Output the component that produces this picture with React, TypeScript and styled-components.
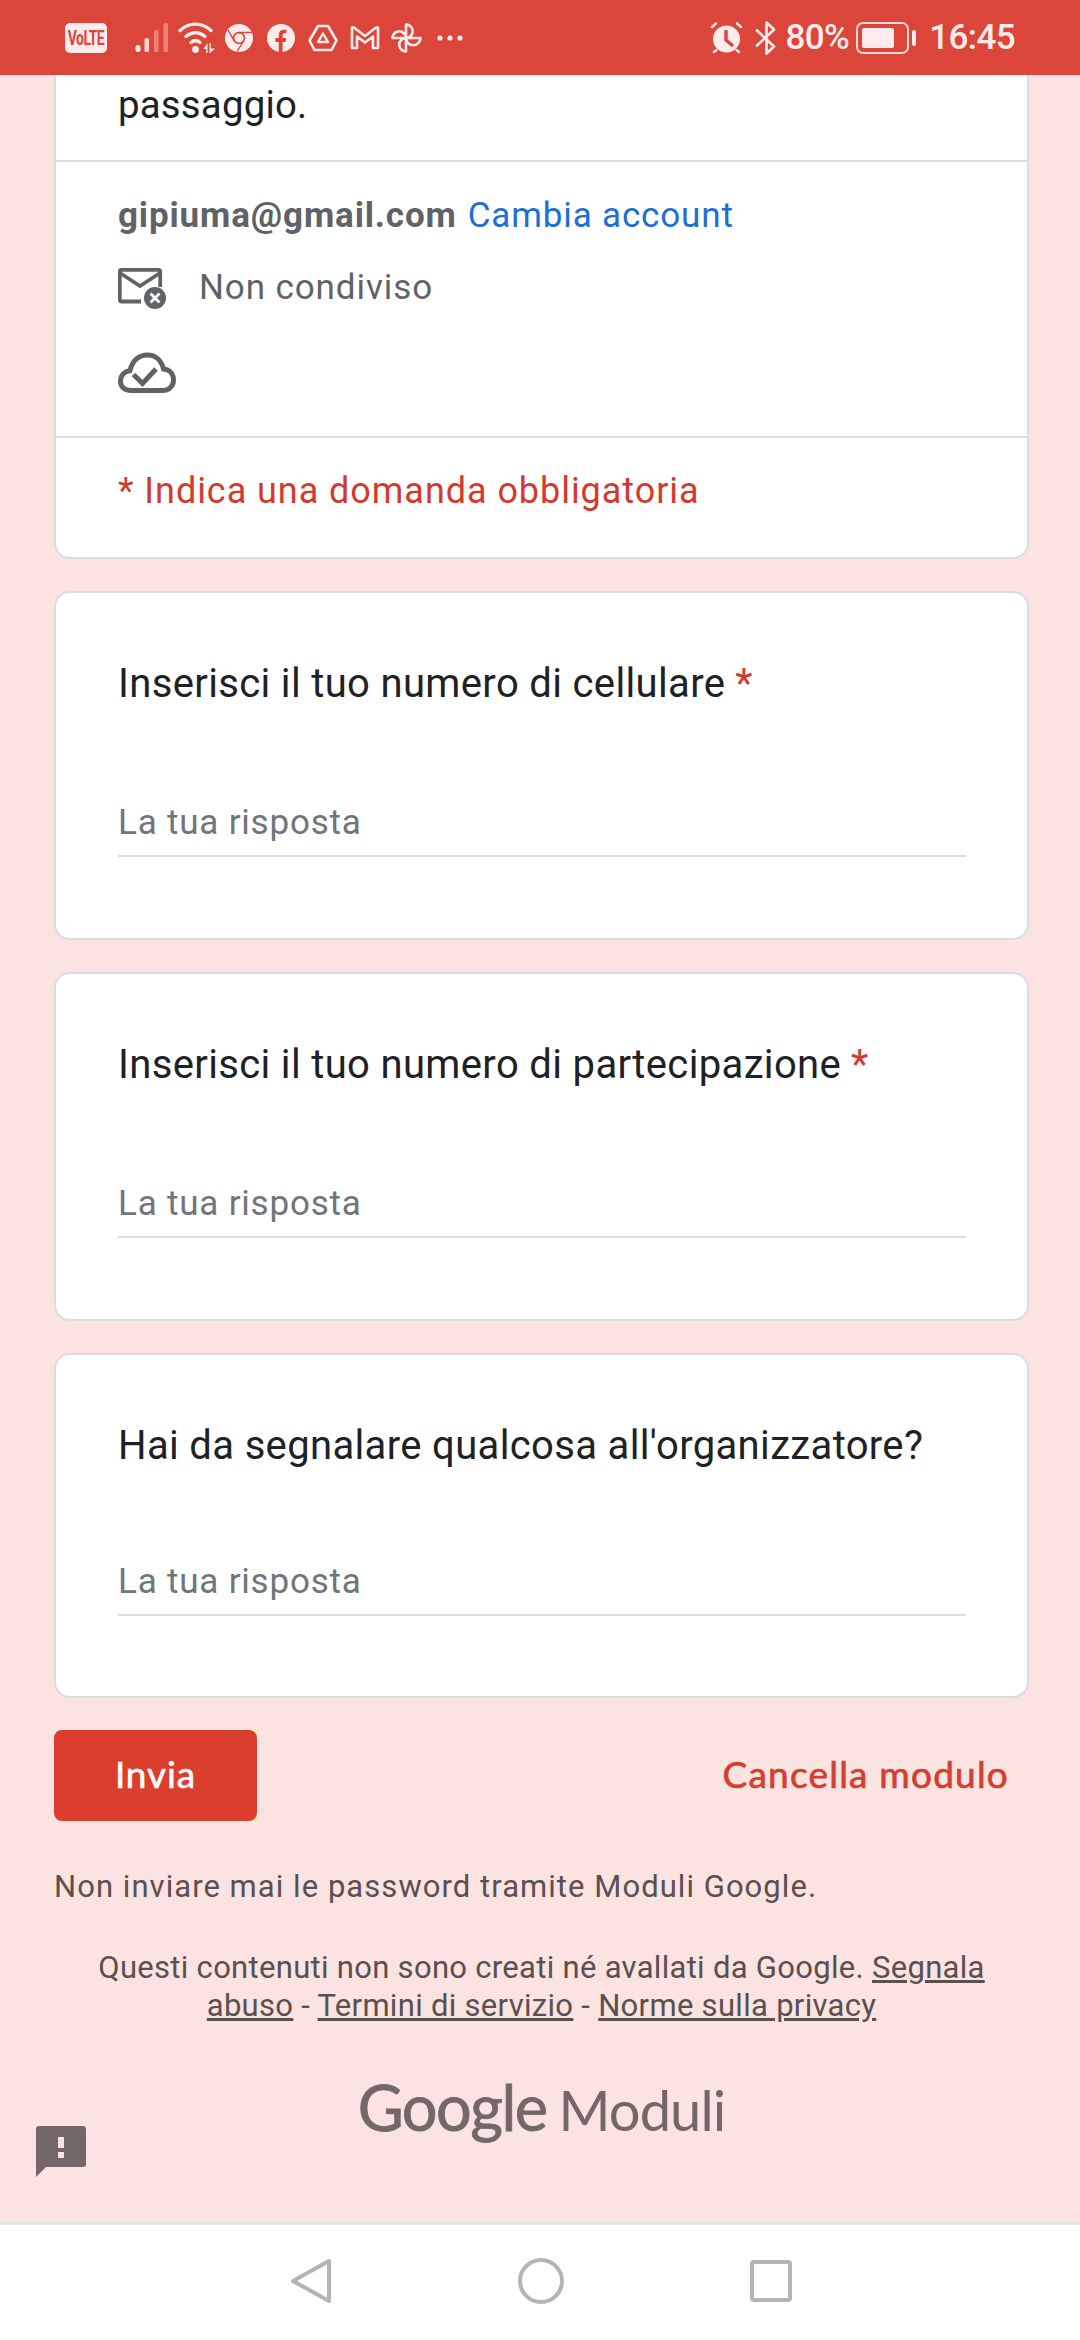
import styled, { createGlobalStyle } from "styled-components";

const GlobalStyle = createGlobalStyle`
  html, body {
    margin: 0;
    padding: 0;
    background: #fae3e1;
  }
  * {
    box-sizing: border-box;
  }
`;

const Screen = styled.div`
  width: 1080px;
  height: 2340px;
  display: flex;
  flex-direction: column;
  overflow: hidden;
  background: #fae3e1;
  font-family: Roboto, "Liberation Sans", sans-serif;
  position: relative;
`;

const StatusBar = styled.div`
  height: 75px;
  flex: none;
  background: #dc4539;
  color: #fdeceb;
  display: flex;
  align-items: center;
  justify-content: space-between;
  padding: 0 65px;
`;

const StatusGroup = styled.div`
  display: flex;
  align-items: center;
`;

const StatusText = styled.span<{ $left: number }>`
  margin-left: ${(p) => p.$left}px;
  font-size: 35px;
  font-weight: 500;
  line-height: 40px;
  letter-spacing: -0.6px;
`;

const VolteBadge = styled.div`
  width: 42px;
  height: 30px;
  flex: none;
  border-radius: 5px;
  background: #fdeceb;
  color: #dc4539;
  display: flex;
  align-items: center;
  justify-content: center;
  font-size: 14px;
  font-weight: 700;
  letter-spacing: -0.6px;
`;

const VolteLabel = styled.span`
  display: block;
  transform: scaleY(1.4);
`;

const Main = styled.div`
  flex: 1;
  display: flex;
  flex-direction: column;
  padding: 0 51px 0 54px;
`;

const Card = styled.section<{ $height: number }>`
  height: ${(p) => p.$height}px;
  flex: none;
  background: #fff;
  border: 2px solid #dadce0;
  border-radius: 16px;
  margin-bottom: 32px;
  padding: 66px 62px 0;
  display: flex;
  flex-direction: column;
`;

const HeaderCard = styled(Card)`
  border-top: 0;
  border-top-left-radius: 0;
  border-top-right-radius: 0;
  padding: 0;
`;

const HeaderRow = styled.div<{ $height: number }>`
  height: ${(p) => p.$height}px;
  flex: none;
  padding: 0 62px;
  border-bottom: 2px solid #dadce0;
`;

const LeadText = styled.div`
  font-size: 38.4px;
  line-height: 48px;
  letter-spacing: 0.2px;
  color: #202124;
  padding-top: 6px;
`;

const AccountLine = styled.div`
  font-size: 35px;
  line-height: 44px;
  padding-top: 32px;
  letter-spacing: 0.85px;
`;

const Email = styled.span`
  font-weight: 700;
  color: #5f6368;
`;

const SwitchLink = styled.span`
  color: #1b6fd6;
  margin-left: 11px;
`;

const ShareRow = styled.div`
  display: flex;
  align-items: center;
  gap: 33px;
  margin-top: 28px;
  color: #5f6368;
  font-size: 35px;
  line-height: 44px;
  letter-spacing: 0.9px;
`;

const CloudRow = styled.div`
  margin-top: 42px;
  height: 42px;
`;

const RequiredNote = styled.div`
  font-size: 36px;
  line-height: 46px;
  color: #d3392d;
  padding: 30px 62px 0;
  letter-spacing: 0.95px;
`;

const Question = styled.div`
  font-size: 40px;
  line-height: 50px;
  color: #202124;
  letter-spacing: 0.35px;
`;

const Star = styled.span`
  color: #d3392d;
  margin-left: 10px;
`;

const AnswerField = styled.div<{ $top: number }>`
  width: 848px;
  margin-top: ${(p) => p.$top}px;
  padding-bottom: 12px;
  border-bottom: 2px solid #dadce0;
  font-size: 35px;
  line-height: 40px;
  letter-spacing: 0.8px;
  color: #70757a;
`;

const ActionRow = styled.div`
  display: flex;
  align-items: center;
  justify-content: space-between;
  padding-right: 20px;
  font-family: Lato, Roboto, sans-serif;
`;

const SubmitButton = styled.button`
  width: 203px;
  height: 91px;
  border: 0;
  border-radius: 8px;
  padding: 0 0 5px;
  background: #db3e2d;
  color: #fff;
  font-family: inherit;
  font-size: 37px;
  letter-spacing: 0.9px;
  -webkit-text-stroke: 0.6px #fff;
`;

const ClearButton = styled.span`
  margin-bottom: 5px;
  color: #d43f30;
  font-size: 37px;
  letter-spacing: 1.2px;
  -webkit-text-stroke: 0.7px #d43f30;
`;

const PasswordNote = styled.div`
  margin-top: 46px;
  font-size: 31px;
  line-height: 40px;
  letter-spacing: 1.05px;
  color: #5b4f4f;
`;

const Disclaimer = styled.div`
  margin-top: 42px;
  padding: 0 30px;
  text-align: center;
  font-size: 31px;
  line-height: 38px;
  letter-spacing: 0.3px;
  color: #5b4f4f;
`;

const LegalLink = styled.span`
  text-decoration: underline;
`;

const Branding = styled.div`
  margin-top: 42px;
  display: flex;
  justify-content: center;
  align-items: baseline;
  gap: 12px;
  color: #736867;
  font-family: Lato, "Open Sans", sans-serif;
`;

const BrandName = styled.span`
  font-size: 63px;
  line-height: 80px;
  font-weight: 400;
  letter-spacing: -1.5px;
  -webkit-text-stroke: 0.8px #736867;
`;

const BrandProduct = styled.span`
  font-size: 56px;
  line-height: 80px;
  font-weight: 400;
  letter-spacing: -0.9px;
`;

const FeedbackIcon = styled.svg`
  position: absolute;
  left: 36px;
  top: 2126px;
`;

const NavBar = styled.nav`
  height: 118px;
  flex: none;
  background: #fff;
  border-top: 3px solid #e4e6e3;
  display: flex;
  align-items: center;
  justify-content: center;
  gap: 186px;
  padding: 0 0 3px 2px;
`;

const Icon = styled.svg<{ $left?: number }>`
  flex: none;
  display: block;
  margin-left: ${(p) => p.$left ?? 0}px;
`;

const Signal = () => (
  <Icon $left={28} width="34" height="30" viewBox="0 0 34 30">
    <rect x="0.500" y="22" width="5" height="7" rx="2.500" fill="#fdeceb" />
    <rect x="9.500" y="15" width="4.500" height="14" rx="1.500" fill="#f9d2cd" />
    <rect x="19" y="7" width="4.500" height="22" rx="1.500" fill="#ed8177" />
    <rect x="28.500" y="0" width="4.500" height="29" rx="1.500" fill="#ed8177" />
  </Icon>
);

const Wifi = () => (
  <Icon $left={9} width="38" height="32" viewBox="0 0 38 32" fill="none">
    <path d="M2 8.500C11 0 24 0 33 8.500" stroke="#fdeceb" strokeWidth="3.400" strokeLinecap="round" />
    <path d="M8 14.500C14 9.500 21 9.500 27 14.500" stroke="#fdeceb" strokeWidth="3.400" strokeLinecap="round" />
    <path d="M13 20.500C16 18 19 18 22 20.500" stroke="#fdeceb" strokeWidth="3.400" strokeLinecap="round" />
    <circle cx="17.500" cy="27.500" r="3.400" fill="#fdeceb" />
    <path d="M25.500 27l4-6v10h-1.200v-4zM31.500 21h1.300v5.500H37l-5.500 5z" fill="#fdeceb" />
  </Icon>
);

const ChromeIcon = () => (
  <Icon $left={9} width="28" height="28" viewBox="0 0 28 28" fill="none">
    <circle cx="14" cy="14" r="14" fill="#fdeceb" />
    <circle cx="14" cy="14" r="5.400" fill="#fdeceb" stroke="#dc4539" strokeWidth="1.600" />
    <path d="M14 8.500H27M9.200 16.800L3 6M18.700 16.800L12 27.500" stroke="#dc4539" strokeWidth="1.400" />
  </Icon>
);

const FacebookIcon = () => (
  <Icon $left={14} width="28" height="28" viewBox="0 0 28 28">
    <circle cx="14" cy="14" r="14" fill="#fdeceb" />
    <path d="M11.800 28V18H8.500v-4h3.300v-3c0-3.400 2-5.200 5-5.200 1.400 0 2.600.2 2.600.2v3.300h-1.600c-1.700 0-2.200 1-2.200 2.100V14h3.600l-.6 4h-3V28z" fill="#dc4539" />
  </Icon>
);

const DriveIcon = () => (
  <Icon $left={13} width="30" height="28" viewBox="0 0 30 28" fill="none">
    <path d="M10 2h10l8.500 14.500-5 9.500H6.500L1.500 16.500z" stroke="#fdeceb" strokeWidth="2.600" strokeLinejoin="round" />
    <path d="M15 9.500l5 8.500H10z" stroke="#fdeceb" strokeWidth="2.400" strokeLinejoin="round" />
  </Icon>
);

const GmailIcon = () => (
  <Icon $left={12} width="30" height="25" viewBox="0 0 30 25" fill="none">
    <path d="M2 23V2.500h2L15 11 26 2.500h2V23h-5V11.500l-8 6-8-6V23z" stroke="#fdeceb" strokeWidth="2.600" strokeLinejoin="round" />
  </Icon>
);

const PinwheelIcon = () => (
  <Icon $left={11} width="31" height="30" viewBox="0 0 31 30" fill="none">
    <path d="M15 15V1.500A6.750 6.750 0 0 1 15 15z" stroke="#fdeceb" strokeWidth="2.600" strokeLinejoin="round" />
    <path d="M15 15H29.500A7.250 7.250 0 0 1 15 15z" stroke="#fdeceb" strokeWidth="2.600" strokeLinejoin="round" />
    <path d="M15 15V28.500A6.750 6.750 0 0 1 15 15z" stroke="#fdeceb" strokeWidth="2.600" strokeLinejoin="round" />
    <path d="M15 15H1.500A6.750 6.750 0 0 1 15 15z" stroke="#fdeceb" strokeWidth="2.600" strokeLinejoin="round" />
  </Icon>
);

const MoreDots = () => (
  <Icon $left={15} width="26" height="6" viewBox="0 0 26 6">
    <circle cx="3" cy="3" r="2.600" fill="#fdeceb" />
    <circle cx="13" cy="3" r="2.600" fill="#fdeceb" />
    <circle cx="23" cy="3" r="2.600" fill="#fdeceb" />
  </Icon>
);

const AlarmIcon = () => (
  <Icon width="33" height="32" viewBox="0 0 33 32" fill="none">
    <circle cx="16.500" cy="17" r="13.500" fill="#fdeceb" />
    <path d="M16 8v10l7 6" stroke="#dc4539" strokeWidth="3.400" />
    <path d="M2 5l4-3.500M31 5l-4-3.500M4 30l2.500-2M29 30l-2.500-2" stroke="#fdeceb" strokeWidth="2.400" strokeLinecap="round" />
  </Icon>
);

const BluetoothIcon = () => (
  <Icon $left={12} width="21" height="34" viewBox="0 0 21 34" fill="none">
    <path d="M2 9.500l17 16-7.500 7V1.500l7.500 7-17 16" stroke="#fdeceb" strokeWidth="2.600" strokeLinejoin="round" strokeLinecap="round" />
  </Icon>
);

const BatteryIcon = () => (
  <Icon $left={7} width="60" height="32" viewBox="0 0 60 32" fill="none">
    <rect x="1" y="1" width="51" height="30" rx="6" stroke="#f9d9d5" strokeWidth="2" />
    <rect x="6" y="6" width="32" height="20" rx="2" fill="#fdeceb" />
    <rect x="56" y="8" width="4" height="16" rx="2" fill="#fdeceb" />
  </Icon>
);

const MailOffIcon = () => (
  <Icon width="48" height="41" viewBox="0 0 48 41" fill="none">
    <path d="M23 33.500H3A1.500 1.500 0 0 1 1.800 32V3A1.500 1.500 0 0 1 3 1.800h38A1.500 1.500 0 0 1 42.200 3v16" stroke="#5f6368" strokeWidth="3.800" />
    <path d="M2 5l20 13L42 5" stroke="#5f6368" strokeWidth="3.600" />
    <circle cx="37" cy="30" r="11" fill="#5f6368" />
    <path d="M32.500 25.500l9 9M41.500 25.500l-9 9" stroke="#fff" strokeWidth="2.800" />
  </Icon>
);

const CloudCheckIcon = () => (
  <Icon width="58" height="42" viewBox="0 0 58 42" fill="none">
    <path d="M13 38.500C6 38.500 2.500 34.500 2.500 29c0-5.500 4-9.500 9.500-10.500C14.500 8.500 21 3 29.500 3 37.500 3 43.500 8.500 45.500 17 51.500 17.500 55.500 22 55.500 28c0 6-4.500 10.500-10.500 10.500z" stroke="#5f6368" strokeWidth="5" />
    <path d="M15.500 22.500l9 9 13.500-14.500" stroke="#5f6368" strokeWidth="5" />
  </Icon>
);

const BackIcon = () => (
  <Icon width="42" height="46" viewBox="0 0 42 46" fill="none">
    <path d="M39 3v40L3 23z" stroke="#b4b4b4" strokeWidth="4" strokeLinejoin="round" />
  </Icon>
);

const HomeIcon = () => (
  <Icon width="46" height="46" viewBox="0 0 46 46" fill="none">
    <circle cx="23" cy="23" r="21" stroke="#b4b4b4" strokeWidth="4" />
  </Icon>
);

const RecentIcon = () => (
  <Icon width="42" height="42" viewBox="0 0 42 42" fill="none">
    <rect x="2" y="2" width="38" height="38" rx="2" stroke="#b4b4b4" strokeWidth="4" />
  </Icon>
);

const questions = [
  { label: "Inserisci il tuo numero di cellulare", required: true, height: 349, top: 94 },
  { label: "Inserisci il tuo numero di partecipazione", required: true, height: 349, top: 94 },
  { label: "Hai da segnalare qualcosa all'organizzatore?", required: false, height: 345, top: 91 },
];

export default function App() {
  return (
    <Screen>
      <GlobalStyle />
      <StatusBar>
        <StatusGroup>
          <VolteBadge>
            <VolteLabel>VoLTE</VolteLabel>
          </VolteBadge>
          <Signal />
          <Wifi />
          <ChromeIcon />
          <FacebookIcon />
          <DriveIcon />
          <GmailIcon />
          <PinwheelIcon />
          <MoreDots />
        </StatusGroup>
        <StatusGroup>
          <AlarmIcon />
          <BluetoothIcon />
          <StatusText $left={9}>80%</StatusText>
          <BatteryIcon />
          <StatusText $left={13}>16:45</StatusText>
        </StatusGroup>
      </StatusBar>

      <Main>
        <HeaderCard $height={484}>
          <HeaderRow $height={87}>
            <LeadText>passaggio.</LeadText>
          </HeaderRow>
          <HeaderRow $height={276}>
            <AccountLine>
              <Email>gipiuma@gmail.com</Email>
              <SwitchLink>Cambia account</SwitchLink>
            </AccountLine>
            <ShareRow>
              <MailOffIcon />
              <span>Non condiviso</span>
            </ShareRow>
            <CloudRow>
              <CloudCheckIcon />
            </CloudRow>
          </HeaderRow>
          <RequiredNote>* Indica una domanda obbligatoria</RequiredNote>
        </HeaderCard>

        {questions.map((q) => (
          <Card key={q.label} $height={q.height}>
            <Question>
              {q.label}
              {q.required && <Star>*</Star>}
            </Question>
            <AnswerField $top={q.top}>La tua risposta</AnswerField>
          </Card>
        ))}

        <ActionRow>
          <SubmitButton>Invia</SubmitButton>
          <ClearButton>Cancella modulo</ClearButton>
        </ActionRow>

        <PasswordNote>Non inviare mai le password tramite Moduli Google.</PasswordNote>
        <Disclaimer>
          Questi contenuti non sono creati né avallati da Google. <LegalLink>Segnala abuso</LegalLink> - <LegalLink>Termini di servizio</LegalLink> - <LegalLink>Norme sulla privacy</LegalLink>
        </Disclaimer>

        <Branding>
          <BrandName>Google</BrandName>
          <BrandProduct>Moduli</BrandProduct>
        </Branding>
      </Main>

      <FeedbackIcon width="50" height="51" viewBox="0 0 50 51">
        <path d="M3 0h44a3 3 0 0 1 3 3v35a3 3 0 0 1-3 3H10L0 51V3a3 3 0 0 1 3-3z" fill="#736867" />
        <rect x="22" y="11" width="6" height="11" fill="#fae3e1" />
        <rect x="22" y="26" width="6" height="6" fill="#fae3e1" />
      </FeedbackIcon>

      <NavBar>
        <BackIcon />
        <HomeIcon />
        <RecentIcon />
      </NavBar>
    </Screen>
  );
}
